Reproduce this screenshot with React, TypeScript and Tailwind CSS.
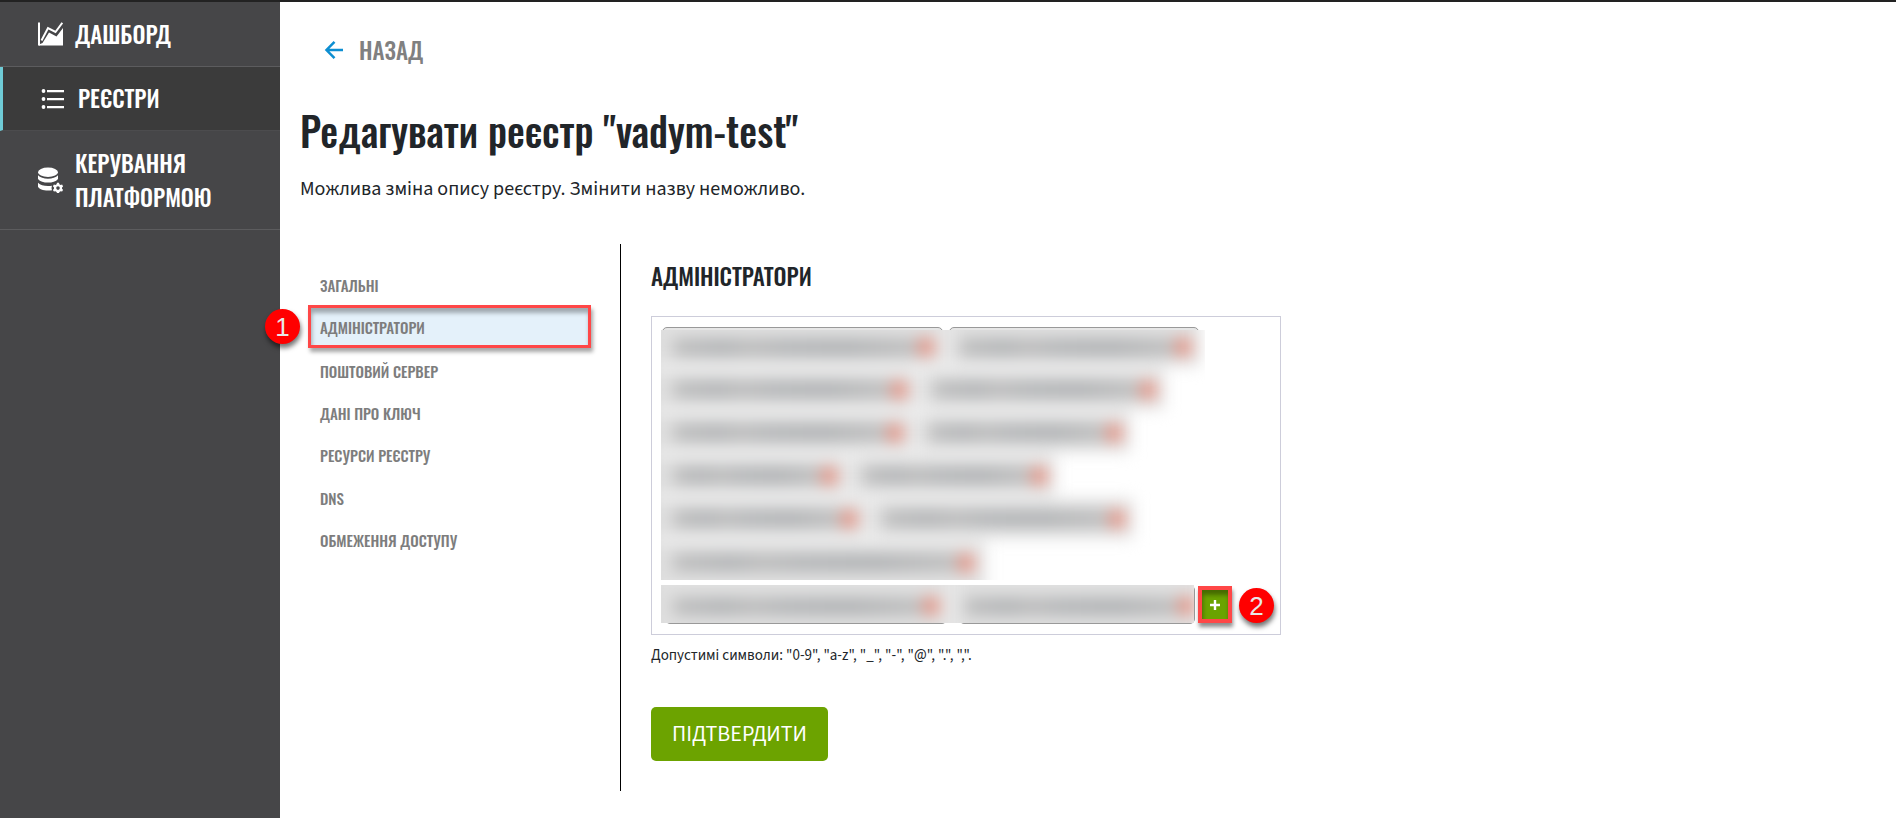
import React from "react";

type Chip = { width: string; edge?: boolean };

const upperRows: Chip[][] = [
  [{ width: "w-[281px]" }, { width: "w-[252px]", edge: true }],
  [{ width: "w-[254px]" }, { width: "w-[243px]" }],
  [{ width: "w-[250px]" }, { width: "w-[213px]" }],
  [{ width: "w-[184px]" }, { width: "w-[204px]" }],
  [{ width: "w-[204px]" }, { width: "w-[262px]" }],
  [{ width: "w-[321px]" }],
];

const sections = [
  "Загальні",
  "Адміністратори",
  "Поштовий сервер",
  "Дані про ключ",
  "Ресурси реєстру",
  "DNS",
  "Обмеження доступу",
];

const condensed = "font-['Oswald','Roboto_Condensed',sans-serif]";

function ChartIcon() {
  return (
    <svg viewBox="0 0 25 24" className="h-6 w-[25px] shrink-0" fill="none" aria-hidden="true">
      <path d="M1 .5v23" stroke="#fff" strokeWidth="2" />
      <path d="M3.500 18.500 10 6l7.500 4L24.300.8" stroke="#fff" strokeWidth="2" />
      <path d="M1 22.500 4.500 21 11 10.500l7.500 4L25 6v17.500H1z" fill="#fff" />
    </svg>
  );
}

function ListIcon() {
  return (
    <svg viewBox="0 0 24 20" className="h-5 w-6 shrink-0" fill="#fff" aria-hidden="true">
      <circle cx="2.500" cy="2" r="1.900" />
      <circle cx="2.500" cy="10" r="1.900" />
      <circle cx="2.500" cy="18" r="1.900" />
      <path d="M6 1h17v2.200H6zM6 9h17v2.200H6zM6 17h17v2.200H6z" />
    </svg>
  );
}

function DatabaseGearIcon() {
  return (
    <svg viewBox="0 0 26 26" className="h-[26px] w-[26px] shrink-0" fill="#fff" aria-hidden="true">
      <ellipse cx="11" cy="5.200" rx="10" ry="4.700" />
      <path d="M1 8.300c2 2.400 5.800 3.400 10 3.400s8-1 10-3.400V12c-2 2.600-5.800 3.600-10 3.600S3 14.600 1 12z" />
      <path d="M1 15.800c2 2.200 5.800 3.200 10 3.200 1.500 0 2.800-.1 4-.3-.6 1.500-.6 3 .1 4.600-1.300.2-2.700.2-4.100.2-5 0-9-1.300-10-3.700z" />
      <path
        fillRule="evenodd"
        d="M20 15.800h2l.4 1.500 1.200.7 1.500-.4 1 1.700-1.100 1.100v1.400l1.100 1.100-1 1.700-1.500-.4-1.200.7-.4 1.300h-2l-.4-1.300-1.200-.7-1.500.4-1-1.700 1.100-1.100v-1.400l-1.100-1.100 1-1.700 1.500.4 1.200-.7zM21 19.300a1.800 1.800 0 1 0 0 3.600 1.800 1.800 0 0 0 0-3.600z"
      />
    </svg>
  );
}

function BackArrow() {
  return (
    <svg viewBox="0 0 20 20" className="h-5 w-5" fill="none" stroke="#0d8ed1" strokeWidth="2.500" aria-hidden="true">
      <path d="M19 10H3M10.500 1.800 2.500 10l8 8.200" />
    </svg>
  );
}

function Badge({ children, className }: { children: React.ReactNode; className: string }) {
  return (
    <span
      className={`absolute flex size-[35px] items-center justify-center rounded-full bg-[#ff0000] font-['Liberation_Sans',sans-serif] text-[26px] leading-none font-normal text-[#e8e8e8] shadow-[1px_4px_5px_rgba(0,0,0,0.55)] ${className}`}
    >
      {children}
    </span>
  );
}

function BlurredChip({ width, first, edge, row }: { width: string; first: boolean; edge?: boolean; row: string }) {
  return (
    <div className={`flex shrink-0 items-center bg-[#e0e0e0] ${first ? "shadow-[-24px_0_0_#dcdcdc,4px_0_0_#e8e8e8]" : ""} ${width} ${row}`}>
      <span className="ml-3 h-[17px] flex-1 bg-[linear-gradient(90deg,#bcbcbc,#b0b2b4_20%,#bababa_32%,#b2b4b6_45%,#aeb0b2_70%,#bdbdbd)]" />
      <span className={`h-[18px] w-4 rounded-md bg-[#e58d7d] ${edge ? "mr-[9px]" : "mr-2"}`} />
    </div>
  );
}

export default function App() {
  return (
    <div className="flex min-h-screen flex-col border-t-2 border-[#222] bg-white font-['Source_Sans_3','Source_Sans_Pro','Noto_Sans',sans-serif] text-[#212529]">
      <div className="flex flex-1">
        <aside className="w-[280px] shrink-0 bg-[#464648]">
          <nav className={`${condensed} text-[23px] leading-[34px] font-medium text-white uppercase`}>
            <a href="#dashboard" className="flex h-[65px] items-center gap-3 border-b border-[#5c5c5e] pl-[38px]">
              <ChartIcon />
              Дашборд
            </a>
            <a href="#registries" className="flex h-16 items-center gap-[13px] border-b border-l-[3px] border-b-[#4c4c4e] border-l-[#6fcbd6] bg-[#3b3b3b] pl-[38px]">
              <ListIcon />
              <span className="pb-0.5">Реєстри</span>
            </a>
            <a href="#platform" className="flex items-center gap-3 border-b border-[#5c5c5e] py-[15px] pl-[37px]">
              <DatabaseGearIcon />
              <span>
                Керування
                <br />
                платформою
              </span>
            </a>
          </nav>
        </aside>

        <main className="min-w-0 flex-1 px-5 pb-[27px]">
          <a href="#back" className={`mt-8 ml-6 flex w-fit items-center gap-[15px] ${condensed} text-[23px] leading-8 font-medium text-[#808080]`}>
            <BackArrow />
            НАЗАД
          </a>
          <h1 className={`mt-[34px] ${condensed} text-[40px] leading-[60px] font-medium`}>Редагувати реєстр "vadym-test"</h1>
          <p className="mt-[14px] text-xl leading-[30px]">Можлива зміна опису реєстру. Змінити назву неможливо.</p>

          <div className="mt-10 flex min-h-[547px]">
            <nav className="w-80 shrink-0 pt-[19px] pr-[29px] pl-2">
              <ul className={`flex min-h-[297px] flex-col justify-between ${condensed} text-[15px] leading-10 font-medium text-[#7d7d7d] uppercase`}>
                {sections.map((name, i) => (
                  <li key={name} className="relative">
                    {i === 1 ? (
                      <>
                        <a
                          href="#admins"
                          className="block border-[3px] border-[#ff4747] bg-[#e4f1fa] pt-0.5 pl-[9px] leading-[35px] shadow-[2px_4px_4px_rgba(0,0,0,0.35),inset_1px_5px_4px_rgba(0,0,0,0.3)]"
                        >
                          {name}
                        </a>
                        <Badge className="top-1 -left-[43px]">1</Badge>
                      </>
                    ) : (
                      <a href="#section" className="block pt-0.5 pl-3">
                        {name}
                      </a>
                    )}
                  </li>
                ))}
              </ul>
            </nav>

            <section className="min-w-0 flex-1 border-l border-black pl-[30px]">
              <h2 className={`mt-4 ${condensed} text-[23px] leading-8 font-medium uppercase`}>Адміністратори</h2>

              <div className="mt-6 flex w-full max-w-[630px] flex-col gap-[5px] border border-[#cdcdda] px-[9px] py-[10px]">
                <div className="relative pt-[3px]">
                  <div className="absolute inset-x-0 top-0 flex gap-[6px] pl-px">
                    <span className="h-[39px] w-[281px] rounded-[5px] border border-[#999] bg-[#e6e6e6]" />
                    <span className="h-[39px] w-[250px] rounded-[5px] border border-[#999] bg-[#e6e6e6]" />
                  </div>
                  <div className="relative w-[544px] overflow-hidden bg-white">
                    <div className="-mt-6 -mb-4 flex flex-col gap-1 blur-[8px]">
                      {upperRows.map((row, r) => (
                        <div key={r} className="flex gap-[6px]">
                          {row.map((chip, c) => (
                            <BlurredChip
                              key={c}
                              width={chip.width}
                              edge={chip.edge}
                              first={c === 0}
                              row={r === 0 ? "h-[60px] pt-[22px]" : r === 5 ? "h-[54px] pb-[13px]" : "h-[39px]"}
                            />
                          ))}
                        </div>
                      ))}
                    </div>
                  </div>
                </div>

                <div className="flex items-center">
                  <div className="relative h-[39px] w-[534px] shrink-0">
                    <div className="absolute inset-0 flex gap-3">
                      <span className="ml-1 w-[282px] rounded-[5px] border border-[#999] bg-[#e6e6e6]" />
                      <span className="flex-1 rounded-[5px] border border-[#999] bg-[#e6e6e6]" />
                    </div>
                    <div className="relative h-[38px] w-[533px] overflow-hidden bg-white">
                      <div className="-mt-4 flex gap-[6px] blur-[8px]">
                        <BlurredChip width="w-[286px]" first row="h-[74px]" />
                        <BlurredChip width="w-[250px]" first={false} edge row="h-[74px]" />
                      </div>
                    </div>
                  </div>
                  <div className="relative ml-[3px] shrink-0">
                    <button
                      type="button"
                      aria-label="Додати адміністратора"
                      className="flex h-[37px] w-[34px] items-center justify-center border-4 border-[#ff4747] bg-[#6aa300] shadow-[1px_4px_4px_rgba(0,0,0,0.45),inset_1px_5px_4px_rgba(0,0,0,0.35)]"
                    >
                      <svg viewBox="0 0 10 10" className="size-[10px]" stroke="#fff" strokeWidth="2.400" aria-hidden="true">
                        <path d="M5 0v10M0 5h10" />
                      </svg>
                    </button>
                    <Badge className="top-0.5 left-[41px]">2</Badge>
                  </div>
                </div>
              </div>

              <p className="mt-[11px] text-[15px] leading-5">Допустимі символи: "0-9", "a-z", "_", "-", "@", ".", ",".</p>

              <button type="submit" className="mt-[41px] h-[54px] rounded-[5px] bg-[#6ca300] px-[21px] text-[22px] text-white">
                ПІДТВЕРДИТИ
              </button>
            </section>
          </div>
        </main>
      </div>
    </div>
  );
}
